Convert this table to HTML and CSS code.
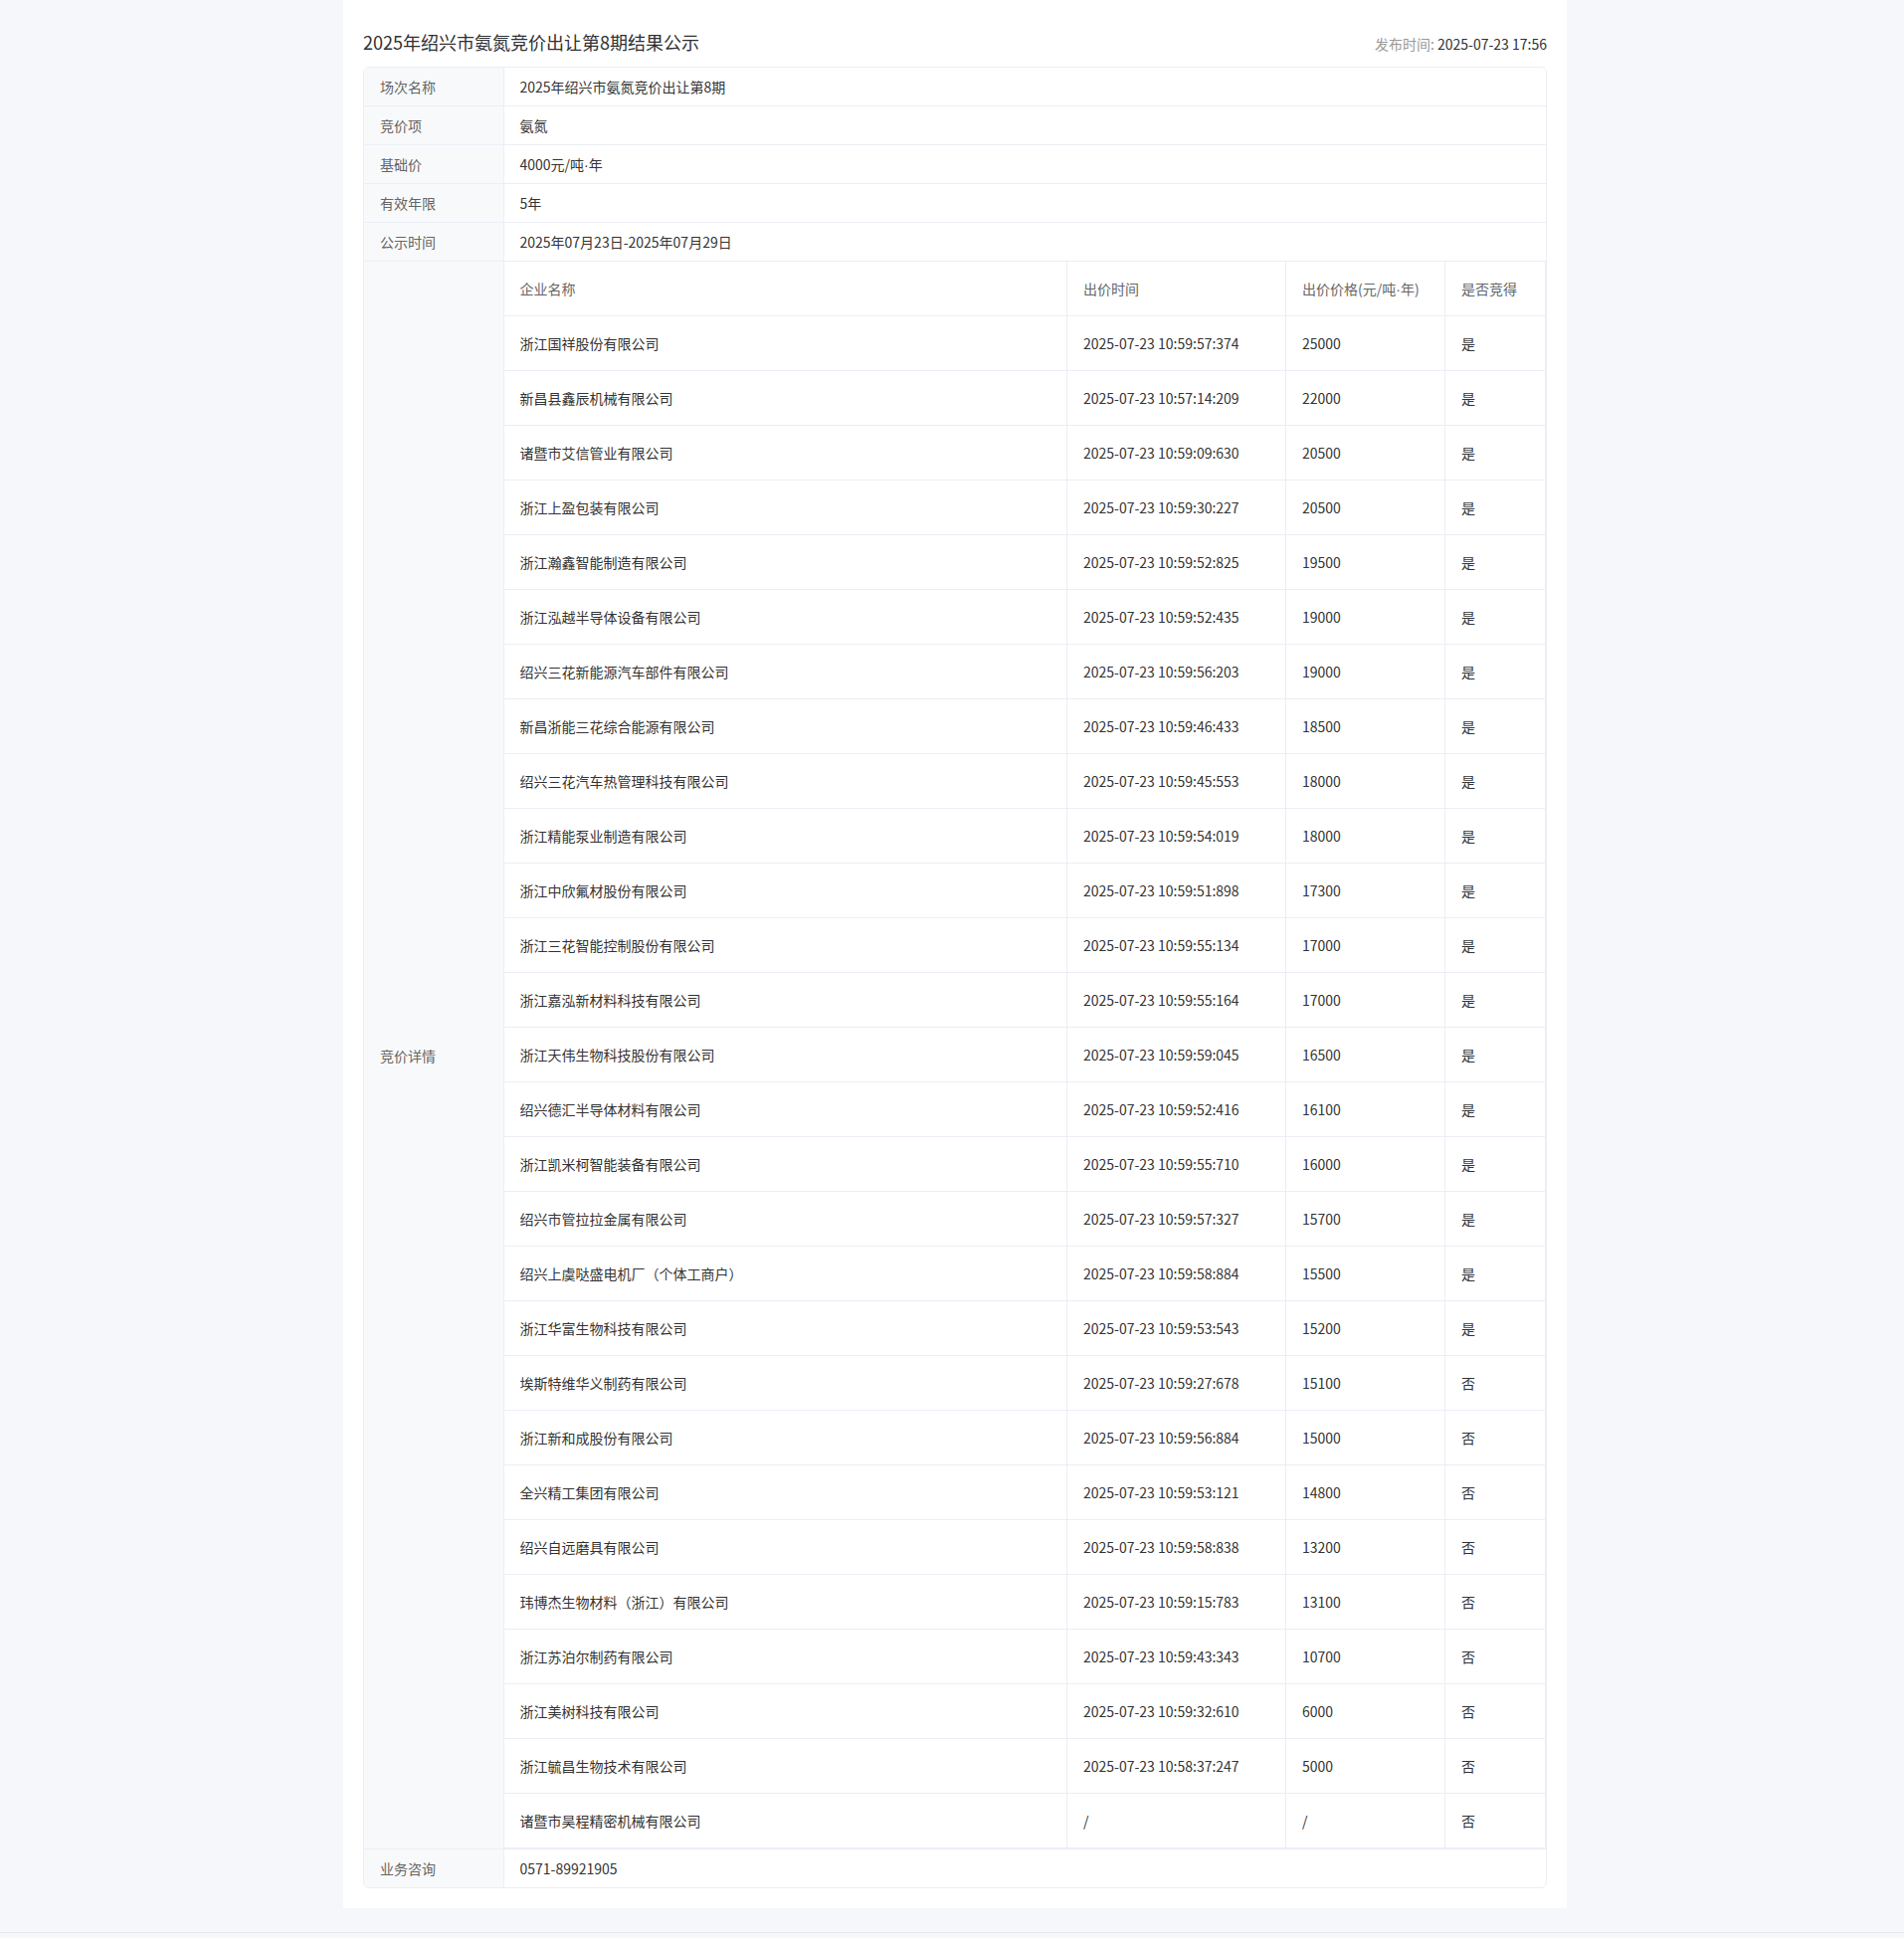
FILE: index.html
```html
<!DOCTYPE html>
<html lang="zh-CN">
<head>
  <meta charset="UTF-8" />
  <meta name="viewport" content="width=device-width, initial-scale=1" />
  <title>2025年绍兴市氨氮竞价出让第8期结果公示</title>
  <link rel="stylesheet" href="styles.css">
</head>
<body>
  <div class="container">
    <div class="page-head">
      <h1 class="page-title">2025年绍兴市氨氮竞价出让第8期结果公示</h1>
      <div class="publish-time"><span class="muted">发布时间:</span> 2025-07-23 17:56</div>
    </div>

    <div class="desc">
      <table class="desc-table">
        <tr>
          <td class="desc-label">场次名称</td>
          <td class="desc-value">2025年绍兴市氨氮竞价出让第8期</td>
        </tr>
        <tr>
          <td class="desc-label">竞价项</td>
          <td class="desc-value">氨氮</td>
        </tr>
        <tr>
          <td class="desc-label">基础价</td>
          <td class="desc-value">4000元/吨<span class="dot">·</span>年</td>
        </tr>
        <tr>
          <td class="desc-label">有效年限</td>
          <td class="desc-value">5年</td>
        </tr>
        <tr>
          <td class="desc-label">公示时间</td>
          <td class="desc-value">2025年07月23日-2025年07月29日</td>
        </tr>
        <tr>
          <td class="desc-label">竞价详情</td>
          <td class="desc-value detail-cell">
            <table class="bid-table">
              <thead>
                <tr>
                  <th>企业名称</th>
                  <th class="col-time">出价时间</th>
                  <th class="col-price">出价价格(元/吨<span class="dot">·</span>年)</th>
                  <th class="col-result">是否竞得</th>
                </tr>
              </thead>
              <tbody>
                <tr><td>浙江国祥股份有限公司</td><td>2025-07-23 10:59:57:374</td><td>25000</td><td>是</td></tr>
                <tr><td>新昌县鑫辰机械有限公司</td><td>2025-07-23 10:57:14:209</td><td>22000</td><td>是</td></tr>
                <tr><td>诸暨市艾信管业有限公司</td><td>2025-07-23 10:59:09:630</td><td>20500</td><td>是</td></tr>
                <tr><td>浙江上盈包装有限公司</td><td>2025-07-23 10:59:30:227</td><td>20500</td><td>是</td></tr>
                <tr><td>浙江瀚鑫智能制造有限公司</td><td>2025-07-23 10:59:52:825</td><td>19500</td><td>是</td></tr>
                <tr><td>浙江泓越半导体设备有限公司</td><td>2025-07-23 10:59:52:435</td><td>19000</td><td>是</td></tr>
                <tr><td>绍兴三花新能源汽车部件有限公司</td><td>2025-07-23 10:59:56:203</td><td>19000</td><td>是</td></tr>
                <tr><td>新昌浙能三花综合能源有限公司</td><td>2025-07-23 10:59:46:433</td><td>18500</td><td>是</td></tr>
                <tr><td>绍兴三花汽车热管理科技有限公司</td><td>2025-07-23 10:59:45:553</td><td>18000</td><td>是</td></tr>
                <tr><td>浙江精能泵业制造有限公司</td><td>2025-07-23 10:59:54:019</td><td>18000</td><td>是</td></tr>
                <tr><td>浙江中欣氟材股份有限公司</td><td>2025-07-23 10:59:51:898</td><td>17300</td><td>是</td></tr>
                <tr><td>浙江三花智能控制股份有限公司</td><td>2025-07-23 10:59:55:134</td><td>17000</td><td>是</td></tr>
                <tr><td>浙江嘉泓新材料科技有限公司</td><td>2025-07-23 10:59:55:164</td><td>17000</td><td>是</td></tr>
                <tr><td>浙江天伟生物科技股份有限公司</td><td>2025-07-23 10:59:59:045</td><td>16500</td><td>是</td></tr>
                <tr><td>绍兴德汇半导体材料有限公司</td><td>2025-07-23 10:59:52:416</td><td>16100</td><td>是</td></tr>
                <tr><td>浙江凯米柯智能装备有限公司</td><td>2025-07-23 10:59:55:710</td><td>16000</td><td>是</td></tr>
                <tr><td>绍兴市管拉拉金属有限公司</td><td>2025-07-23 10:59:57:327</td><td>15700</td><td>是</td></tr>
                <tr><td>绍兴上虞哒盛电机厂（个体工商户）</td><td>2025-07-23 10:59:58:884</td><td>15500</td><td>是</td></tr>
                <tr><td>浙江华富生物科技有限公司</td><td>2025-07-23 10:59:53:543</td><td>15200</td><td>是</td></tr>
                <tr><td>埃斯特维华义制药有限公司</td><td>2025-07-23 10:59:27:678</td><td>15100</td><td>否</td></tr>
                <tr><td>浙江新和成股份有限公司</td><td>2025-07-23 10:59:56:884</td><td>15000</td><td>否</td></tr>
                <tr><td>全兴精工集团有限公司</td><td>2025-07-23 10:59:53:121</td><td>14800</td><td>否</td></tr>
                <tr><td>绍兴自远磨具有限公司</td><td>2025-07-23 10:59:58:838</td><td>13200</td><td>否</td></tr>
                <tr><td>玮博杰生物材料（浙江）有限公司</td><td>2025-07-23 10:59:15:783</td><td>13100</td><td>否</td></tr>
                <tr><td>浙江苏泊尔制药有限公司</td><td>2025-07-23 10:59:43:343</td><td>10700</td><td>否</td></tr>
                <tr><td>浙江美树科技有限公司</td><td>2025-07-23 10:59:32:610</td><td>6000</td><td>否</td></tr>
                <tr><td>浙江毓昌生物技术有限公司</td><td>2025-07-23 10:58:37:247</td><td>5000</td><td>否</td></tr>
                <tr><td>诸暨市昊程精密机械有限公司</td><td>/</td><td>/</td><td>否</td></tr>
              </tbody>
            </table>
          </td>
        </tr>
        <tr>
          <td class="desc-label">业务咨询</td>
          <td class="desc-value">0571-89921905</td>
        </tr>
      </table>
    </div>
  </div>

  <div class="footer"></div>
</body>
</html>
```

FILE: styles.css
```css
* {
  box-sizing: border-box;
}
html, body {
  margin: 0;
  padding: 0;
}
body {
  background-color: #f5f7fa;
  color: #333;
  font-family: "Noto Sans CJK SC", "Noto Sans", sans-serif;
  font-size: 14px;
  line-height: 22px;
}
.container {
  width: 1230px;
  margin: 0 0 0 calc(50% - 612px);
  padding: 30px 20px 20px;
  background-color: #fff;
}
.page-head {
  display: flex;
  justify-content: space-between;
  align-items: baseline;
  margin-bottom: 12px;
}
.page-title {
  margin: 0;
  font-size: 18px;
  font-weight: 400;
  line-height: 24px;
  color: #303133;
}
.publish-time {
  color: #303133;
}
.muted {
  color: #999;
}
.dot {
  font-family: "Liberation Sans", sans-serif;
  line-height: 0;
}
.desc {
  border: 1px solid #ebeef5;
  border-radius: 6px;
  overflow: hidden;
}
table {
  border-collapse: collapse;
  width: 100%;
}
.desc-table td {
  border: 1px solid #ebeef5;
  padding: 8px 16px;
  vertical-align: middle;
  text-align: left;
}
.desc-table > tbody > tr:first-child > td {
  border-top: 0;
}
.desc-table > tbody > tr:last-child > td {
  border-bottom: 0;
}
.desc-table > tbody > tr > td:first-child {
  border-left: 0;
}
.desc-table > tbody > tr > td:last-child {
  border-right: 0;
}
.desc-table td.desc-label {
  width: 140px;
  background-color: #f8f9fb;
  color: #666;
}
.desc-table td.desc-value {
  color: #333;
}
.desc-table td.detail-cell {
  padding: 0;
}
.bid-table th,
.bid-table td {
  border: 1px solid #ebeef5;
  padding: 16px 16px;
  text-align: left;
  font-weight: 400;
  color: #333;
}
.bid-table th {
  color: #666;
}
.bid-table thead tr th {
  border-top: 0;
}
.bid-table tr th:first-child,
.bid-table tr td:first-child {
  border-left: 0;
}
.bid-table .col-time {
  width: 220px;
}
.bid-table .col-price {
  width: 160px;
}
.bid-table .col-result {
  width: 101px;
}
.footer {
  margin-top: 24px;
  height: 40px;
  border-top: 1px solid #e4e7ed;
}
```
